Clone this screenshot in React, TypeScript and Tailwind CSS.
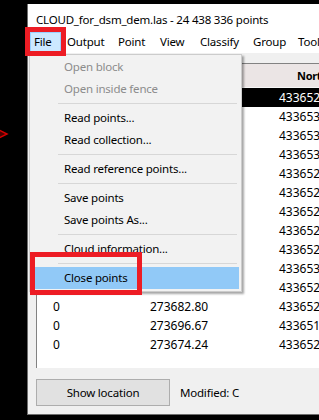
import React from "react";

const rows: [string, string, string][] = [
  ["0", "273690.12", "4336524.18"],
  ["0", "273688.41", "4336531.02"],
  ["0", "273679.95", "4336530.77"],
  ["0", "273701.33", "4336533.60"],
  ["0", "273684.07", "4336527.45"],
  ["0", "273693.58", "4336525.19"],
  ["0", "273677.26", "4336528.83"],
  ["0", "273699.90", "4336522.71"],
  ["0", "273686.64", "4336526.38"],
  ["0", "273672.15", "4336530.04"],
  ["0", "273678.55", "4336524.92"],
  ["0", "273682.80", "4336521.47"],
  ["0", "273696.67", "4336519.83"],
  ["0", "273674.24", "4336523.56"],
];

type Item = { label: string; disabled?: boolean; active?: boolean } | "sep";

const menu: Item[] = [
  { label: "Open block", disabled: true },
  { label: "Open inside fence", disabled: true },
  "sep",
  { label: "Read points..." },
  { label: "Read collection..." },
  "sep",
  { label: "Read reference points..." },
  "sep",
  { label: "Save points" },
  { label: "Save points As..." },
  "sep",
  { label: "Cloud information..." },
  "sep",
  { label: "Close points", active: true },
];

export default function App() {
  return (
    <div
      className="relative w-[319px] h-[420px] bg-black overflow-hidden flex pl-[27px] pt-[4px] pb-[5px] text-[11.5px] tracking-[-0.2px] text-black leading-none"
      style={{ fontFamily: '"Noto Sans", "Open Sans", sans-serif' }}
    >
      {/* red arrow tip on the left */}
      <svg className="absolute left-0 top-[126px]" width="9" height="16" viewBox="0 0 9 16">
        <polygon points="-7,1 7,8 -7,15" fill="#4a0000" stroke="#d40000" strokeWidth="1.5" />
      </svg>

      {/* window */}
      <div className="w-[340px] shrink-0 flex flex-col bg-[#f0f0f0] border-l border-b border-[#6e6e6e]">
        {/* title bar */}
        <div className="h-[27px] bg-white flex items-center pl-[8px] pt-[4px] whitespace-nowrap">
          CLOUD_for_dsm_dem.las - 24 438 336 points
        </div>
        {/* menu bar */}
        <div className="h-[22px] bg-white flex items-center pl-[2px] whitespace-nowrap">
          <div className="w-[31px] h-[21px] bg-[#cce8ff] border border-[#99d1ff] flex items-center pl-[3px]">
            File
          </div>
          <div className="ml-[6px] w-[51px]">Output</div>
          <div className="w-[42px]">Point</div>
          <div className="w-[40px]">View</div>
          <div className="w-[53px]">Classify</div>
          <div className="w-[45px]">Group</div>
          <div className="w-[40px]">Tools</div>
        </div>

        {/* content */}
        <div className="flex-1 flex flex-col pl-[8px] pt-[10px] pb-[8px]">
          <div className="h-[305px] bg-white border-l border-t border-[#828282] flex flex-col overflow-hidden text-[12px] tracking-normal">
            <div className="h-[24px] shrink-0 bg-[#ebe5e5] grid grid-cols-[113px_129px_1fr] items-center whitespace-nowrap font-bold text-[11px] tracking-[-0.3px] border-b border-[#f7f7f7]">
              <div className="pl-[16px]">Class</div>
              <div className="pl-[4px]">Easting</div>
              <div className="pl-[18px]">Northing</div>
            </div>
            {rows.map((r, i) => (
              <div
                key={i}
                className={
                  "h-[19px] shrink-0 grid grid-cols-[113px_129px_1fr] items-center whitespace-nowrap " +
                  (i === 0 ? "bg-black text-white" : "")
                }
              >
                <div className="pl-[16px]">{r[0]}</div>
                <div>{r[1]}</div>
                <div>{r[2]}</div>
              </div>
            ))}
          </div>

          <div className="mt-[11px] flex items-center">
            <div className="w-[134px] h-[27px] bg-[#e1e1e1] border border-[#adadad] flex items-center justify-center">
              Show location
            </div>
            <div className="ml-[10px]">Modified: C</div>
          </div>
        </div>
      </div>

      {/* dropdown menu */}
      <div className="absolute left-[29px] top-[54px] w-[213px] bg-[#f2f2f2] border border-[#cccccc] pt-[1px] pb-[2px] shadow-[2px_2px_2px_rgba(0,0,0,0.35)]">
        {menu.map((m, i) =>
          m === "sep" ? (
            <div key={i} className="h-[7px] flex items-center ml-[28px] mr-[4px]">
              <div className="h-px w-full bg-[#d7d7d7]" />
            </div>
          ) : (
            <div
              key={i}
              className={
                "h-[22px] mx-[2px] flex items-center pl-[32px] whitespace-nowrap " +
                (m.active ? "bg-[#91c9f7] " : "") +
                (m.disabled ? "text-[#8c8c8c]" : "text-black")
              }
            >
              {m.label}
            </div>
          )
        )}
      </div>

      {/* red annotation boxes */}
      <div className="absolute left-[25px] top-[27px] w-[41px] h-[29px] border-[5px] border-[#ed1c24]" />
      <div className="absolute left-[30px] top-[252px] w-[112px] h-[43px] border-[5px] border-[#ed1c24]" />
    </div>
  );
}
